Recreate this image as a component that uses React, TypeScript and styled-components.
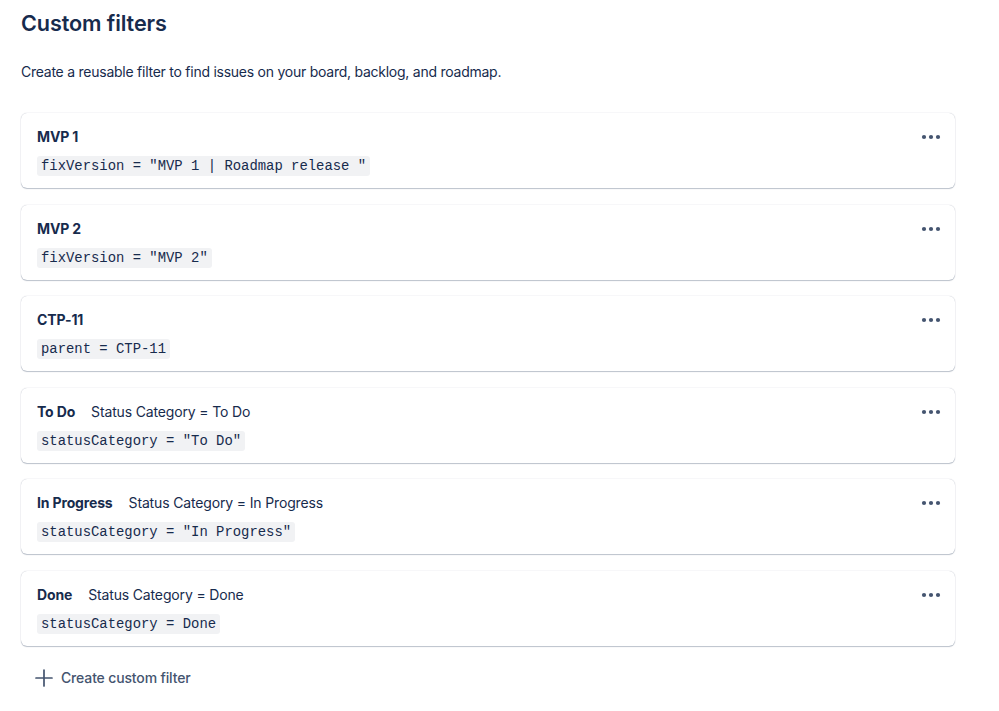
import React from "react";
import styled, { createGlobalStyle } from "styled-components";

const Global = createGlobalStyle`
  html, body { margin: 0; padding: 0; background: #ffffff; }
  body { font-family: Inter, "Noto Sans", "Liberation Sans", sans-serif; color: #172b4d; -webkit-font-smoothing: antialiased; }
`;

const Page = styled.main`
  padding: 7px 44px 20px 21px;
`;

const Heading = styled.h1`
  margin: 0;
  font-size: 21.6px;
  line-height: 32px;
  font-weight: 600;
  letter-spacing: -0.1px;
  color: #172b4d;
`;

const Description = styled.p`
  margin: 23px 0 0;
  font-size: 14px;
  line-height: 20px;
  letter-spacing: -0.25px;
  color: #172b4d;
`;

const List = styled.div`
  margin-top: 31px;
  display: flex;
  flex-direction: column;
  gap: 16.5px;
`;

const Card = styled.div`
  position: relative;
  background: #fff;
  border-radius: 6px;
  box-shadow: 0 1px 1px rgba(9, 30, 66, 0.25), 0 0 1px rgba(9, 30, 66, 0.31);
  padding: 12px 16px 12px 16px;
  display: flex;
  flex-direction: column;
  gap: 7px;
`;

const TitleRow = styled.div`
  display: flex;
  align-items: center;
  gap: 16px;
  height: 24px;
  font-size: 14px;
  line-height: 20px;
  letter-spacing: -0.15px;
`;

const Title = styled.span`
  font-weight: 700;
  color: #172b4d;
`;

const Subtitle = styled.span`
  font-weight: 400;
  color: #172b4d;
`;

const Code = styled.code`
  align-self: flex-start;
  font-family: "Liberation Mono", "DejaVu Sans Mono", monospace;
  font-size: 13.9px;
  line-height: 20px;
  padding: 0 4px;
  background: #f1f2f4;
  border-radius: 3px;
  color: #172b4d;
  white-space: pre;
`;

const MoreButton = styled.button`
  position: absolute;
  top: 8px;
  right: 8px;
  width: 32px;
  height: 32px;
  border: none;
  background: transparent;
  padding: 0;
  display: flex;
  align-items: center;
  justify-content: center;
  cursor: pointer;
  color: #44546f;
`;

const CreateButton = styled.button`
  margin-top: 22px;
  margin-left: 14px;
  display: flex;
  align-items: center;
  gap: 8px;
  border: none;
  background: transparent;
  padding: 0;
  font-family: inherit;
  font-size: 14px;
  line-height: 20px;
  font-weight: 500;
  letter-spacing: -0.15px;
  color: #44546f;
  cursor: pointer;
`;

const Dots = () => (
  <svg width="20" height="6" viewBox="0 0 20 6" fill="currentColor">
    <circle cx="3" cy="3" r="2.1" />
    <circle cx="10" cy="3" r="2.1" />
    <circle cx="17" cy="3" r="2.1" />
  </svg>
);

const Plus = () => (
  <svg width="18" height="18" viewBox="0 0 18 18" fill="none" stroke="currentColor" strokeWidth="1.7" strokeLinecap="round">
    <path d="M9 1v16M1 9h16" />
  </svg>
);

type Filter = { name: string; desc?: string; jql: string };

const filters: Filter[] = [
  { name: "MVP 1", jql: 'fixVersion = "MVP 1 | Roadmap release "' },
  { name: "MVP 2", jql: 'fixVersion = "MVP 2"' },
  { name: "CTP-11", jql: "parent = CTP-11" },
  { name: "To Do", desc: "Status Category = To Do", jql: 'statusCategory = "To Do"' },
  { name: "In Progress", desc: "Status Category = In Progress", jql: 'statusCategory = "In Progress"' },
  { name: "Done", desc: "Status Category = Done", jql: "statusCategory = Done" },
];

export default function App() {
  return (
    <>
      <Global />
      <Page>
        <Heading>Custom filters</Heading>
        <Description>Create a reusable filter to find issues on your board, backlog, and roadmap.</Description>
        <List>
          {filters.map((f) => (
            <Card key={f.name}>
              <TitleRow>
                <Title>{f.name}</Title>
                {f.desc && <Subtitle>{f.desc}</Subtitle>}
              </TitleRow>
              <Code>{f.jql}</Code>
              <MoreButton aria-label="More">
                <Dots />
              </MoreButton>
            </Card>
          ))}
        </List>
        <CreateButton>
          <Plus />
          Create custom filter
        </CreateButton>
      </Page>
    </>
  );
}
